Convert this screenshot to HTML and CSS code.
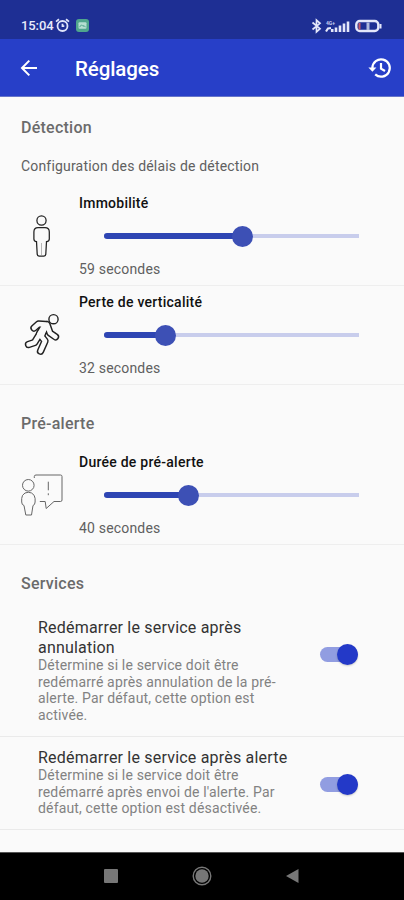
FILE: index.html
```
<!DOCTYPE html>
<html lang="fr">
<head>
<meta charset="utf-8">
<title>Réglages</title>
<link rel="stylesheet" href="styles.css">
</head>
<body>
<header class="status">
  <span class="time">15:04</span>
  <svg class="alarm" width="15" height="15" viewBox="0 0 15 15" fill="none" stroke="#dfe4fa" stroke-width="1.8"><circle cx="7.5" cy="8" r="5"/><path d="M1 3.6 4 1.2M14 3.6 11 1.2M7.5 5.8V8.2H9.3"/></svg>
  <svg class="app" width="13" height="13" viewBox="0 0 13 13"><rect width="13" height="13" rx="3" fill="#4fa68d"/><rect x="2.5" y="3.3" width="8" height="6.4" rx="1" fill="#b5dfd2"/><path d="M3.5 8.2 5.5 5.8 7 7.4 8 6.5 9.5 8.2" fill="none" stroke="#4fa68d"/></svg>
  <span class="grow"></span>
  <svg width="72" height="16" viewBox="0 0 72 16" fill="none" stroke="#e4e7fa">
    <path d="M1.5 4.5 9 10.7 5.5 13.8V2.2L9 5.3 1.5 11.5" stroke-width="1.7"/>
    <path d="M21.2 11V14M25 9.5V14M29 7.5V14M33 5.5V14M37 3.5V14" stroke-width="2.6"/>
    <path d="M15 13.5 17 10.5 20 10" stroke-width="2.2"/>
    <text x="15" y="6.5" class="net">4G+</text>
    <rect x="45.3" y="3" width="22" height="10" rx="3.5" stroke-width="2.4"/>
    <path d="M48.5 5V11.5" stroke="#c85b6b" stroke-width="2"/>
    <path d="M57 4.5V12" stroke-width="3" stroke="#aeb9dc"/>
    <path d="M69.5 6V10.5" stroke-width="2"/>
  </svg>
</header>
<nav class="appbar">
  <svg width="18" height="18" viewBox="0 0 18 18" fill="none" stroke="#fff" stroke-width="2"><path d="M17 9H2.2M9.3 1.6 2 9 9.3 16.4"/></svg>
  <h1>Réglages</h1>
  <svg class="history" width="24" height="22" viewBox="0 0 24 22" fill="none" stroke="#fff" stroke-width="2.2"><path d="M4.4 11A8.7 8.7 0 1 1 7.2 17.4M13 6V11.6L17 14"/><path d="M.4 10.5H8.4L4.4 14.8Z" fill="#fff" stroke="none"/></svg>
</nav>
<main>
  <h2>Détection</h2>
  <p class="intro">Configuration des délais de détection</p>
  <section class="row">
    <svg class="pic" width="46" height="44" viewBox="0 0 46 44" fill="none" stroke="#222" stroke-width="1.25"><circle cx="21.5" cy="6.5" r="4.6"/><path d="M18 13.6H25Q29.3 13.6 29.3 18V25Q29.3 27.4 26.5 27.6L25.8 40Q25.7 42 24 42H19Q17.3 42 17.2 40L16.5 27.6Q13.9 27.4 13.9 25V18Q13.9 13.6 18 13.6Z"/><path d="M21.5 29V41" stroke="#999" stroke-width=".7"/></svg>
    <div class="field"><h3>Immobilité</h3><div class="slider"><div class="fill" style="width:54%"></div><i></i></div><p>59 secondes</p></div>
  </section>
  <section class="row">
    <svg class="pic" width="46" height="44" viewBox="0 0 46 44" fill="none" stroke-linecap="round" stroke-linejoin="round"><circle cx="33.5" cy="6.2" r="4.6" stroke="#222" stroke-width="1.4"/>
      <g stroke="#222" stroke-width="7.4"><path d="M14 15 18.5 11 26 11.5 18.5 23 14.5 29.5 8.5 31.5M27 11.5 30 20 35.5 23.8M25 14 21.5 23.5 25 28 20.5 38.2"/><path d="M25 13.5 20.5 21" stroke-width="9.5"/></g>
      <g stroke="#fafafa" stroke-width="4.5"><path d="M14 15 18.5 11 26 11.5 18.5 23 14.5 29.5 8.5 31.5M27 11.5 30 20 35.5 23.8M25 14 21.5 23.5 25 28 20.5 38.2"/><path d="M25 13.5 20.5 21" stroke-width="6.6"/></g></svg>
    <div class="field"><h3>Perte de verticalité</h3><div class="slider"><div class="fill" style="width:24%"></div><i></i></div><p>32 secondes</p></div>
  </section>
  <h2 class="later">Pré-alerte</h2>
  <section class="row">
    <svg class="pic" width="46" height="44" viewBox="0 0 46 44" fill="none" stroke="#666" stroke-width="1"><circle cx="8.3" cy="12.3" r="5.8"/><path d="M5 20Q1.7 22 1.7 25.5V29Q1.7 32 4 32.5L5.8 42H11.5L13 32.5Q15 32 15.1 29V25.5Q15 22 11.6 20Q8.3 18.5 5 20Z"/><path d="M14.3 5V3.5Q14.3 2 16 2H40.5Q42 2 42 3.5V27Q42 28.5 40.5 28.5H34L26.2 35.5 25.2 28.5H19.8M28.3 8.7V17.3M28.3 20.3V22.2"/></svg>
    <div class="field"><h3>Durée de pré-alerte</h3><div class="slider"><div class="fill" style="width:33%"></div><i></i></div><p>40 secondes</p></div>
  </section>
  <h2 class="later">Services</h2>
  <section class="option first">
    <div class="copy"><h4>Redémarrer le service après<br>annulation</h4><p>Détermine si le service doit être<br>redémarré après annulation de la pré-<br>alerte. Par défaut, cette option est<br>activée.</p></div>
    <div class="switch"><i></i></div>
  </section>
  <section class="option">
    <div class="copy"><h4>Redémarrer le service après alerte</h4><p>Détermine si le service doit être<br>redémarré après envoi de l'alerte. Par<br>défaut, cette option est désactivée.</p></div>
    <div class="switch"><i></i></div>
  </section>
</main>
<footer>
  <svg width="14" height="14"><rect width="14" height="14" rx="1" fill="#777"/></svg>
  <svg width="20" height="20" fill="none" stroke="#777"><circle cx="10" cy="10" r="8.8" stroke-width="1.4"/><circle cx="10" cy="10" r="6.7" fill="#777" stroke="none"/></svg>
  <svg width="13" height="14"><path d="M0 7 12.5 0V14Z" fill="#777"/></svg>
</footer>
</body>
</html>
```
FILE: styles.css
```
* { box-sizing: border-box; margin: 0; padding: 0; }
body { width: 404px; height: 900px; display: flex; flex-direction: column; font-family: Roboto, sans-serif; background: #fafafa; overflow: hidden; }
svg { display: block; flex: none; }
.status { height: 39px; flex: none; display: flex; align-items: center; padding: 12px 21px 0 21px; background: #1e2f94; color: #e8ebfb; }
.time { width: 34px; font-size: 13px; font-weight: 500; letter-spacing: -.1px; }
.app { margin-left: 6px; }
.grow { flex: 1; }
.net { font: 700 5px Roboto, sans-serif; fill: #c5cdf0; stroke: none; }
.appbar { height: 58px; flex: none; display: flex; align-items: center; padding: 0 12px 0 20px; background: #273fc8; border-bottom: 1px solid #6675c9; color: #fff; }
.appbar h1 { flex: 1; margin-left: 37px; padding-top: 2px; font-size: 20.5px; line-height: 24px; font-weight: 500; letter-spacing: -.1px; }
main { flex: 1; }
h2 { height: 20px; margin: 20px 0 0 21px; font-size: 16px; line-height: 22px; font-weight: 500; letter-spacing: .25px; color: #6b6b6b; }
h2.later { margin: 28px 0 13px 21px; }
.intro { margin: 19px 0 11px 21px; font-size: 14px; line-height: 20px; letter-spacing: .18px; color: #606060; }
.row { height: 99px; display: flex; border-bottom: 1px solid #eee; }
.pic { margin: 27px 13px 0 20px; }
.field { flex: 1; padding-top: 8px; }
.field h3 { font-size: 14px; line-height: 16px; font-weight: 500; letter-spacing: .25px; color: #111; }
.field p { font-size: 14px; line-height: 16px; letter-spacing: .18px; color: #606060; }
.slider { width: 255px; height: 50px; margin-left: 25px; display: flex; align-items: center; background: linear-gradient(#c8cdec, #c8cdec) center / 100% 4px no-repeat; }
.fill { height: 6px; border-radius: 3px; background: #2e45b3; }
.slider i { width: 21px; height: 21px; margin-left: -10px; border-radius: 50%; background: #3d50b5; }
.option { height: 93px; display: flex; padding: 11px 0 0 38px; border-bottom: 1px solid #eaeaea; }
.option.first { height: 131px; padding-top: 12px; }
.copy { width: 282px; }
.copy h4 { margin-bottom: -1px; font-size: 16px; line-height: 20px; font-weight: 400; letter-spacing: .2px; color: #333; white-space: nowrap; }
.copy p { font-size: 14px; line-height: 16.6px; letter-spacing: .16px; color: #828282; white-space: nowrap; }
.switch { width: 38px; height: 15px; margin-top: 29px; display: flex; align-items: center; justify-content: flex-end; border-radius: 8px; background: #919de1; }
.switch i { width: 21px; height: 21px; flex: none; border-radius: 50%; background: #2339c8; box-shadow: 0 1px 2px #0003; }
footer { height: 48px; flex: none; display: flex; align-items: center; padding: 0 105px 2px 104px; justify-content: space-between; background: #000; border-top: 1px solid #555; }
```
